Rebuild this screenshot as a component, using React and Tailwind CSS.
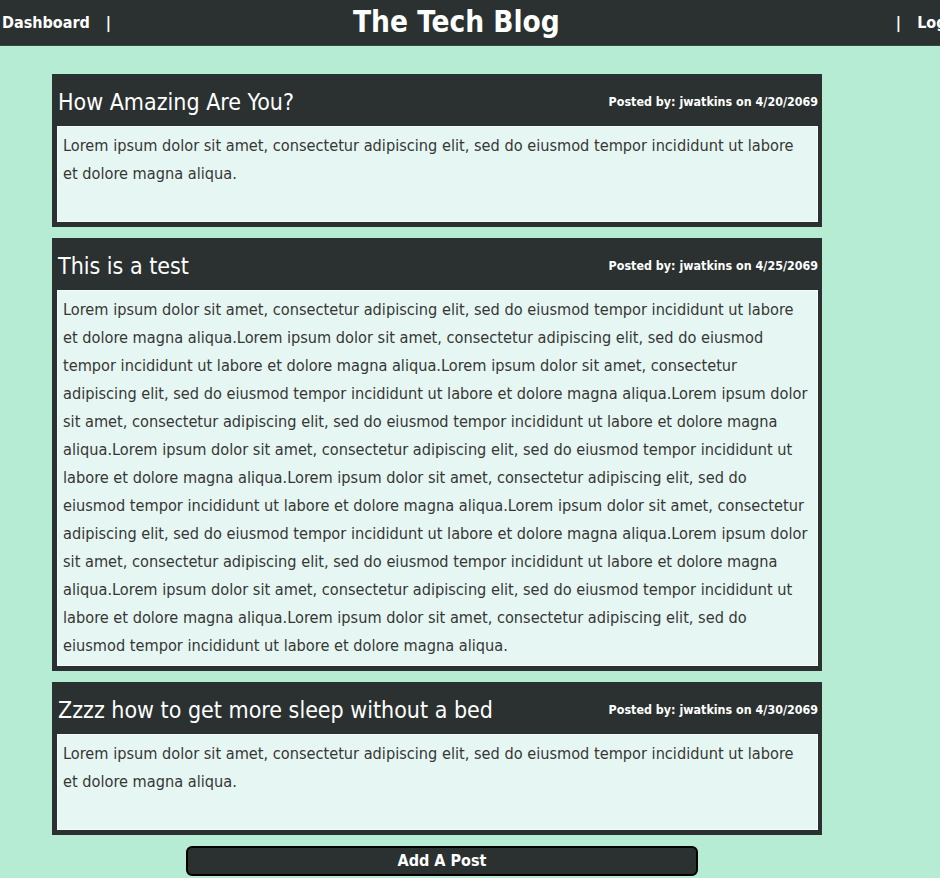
import React from 'react';

const LOREM =
  'Lorem ipsum dolor sit amet, consectetur adipiscing elit, sed do eiusmod tempor incididunt ut labore et dolore magna aliqua.';

const posts = [
  { title: 'How Amazing Are You?', author: 'jwatkins', date: '4/20/2069', body: LOREM },
  { title: 'This is a test', author: 'jwatkins', date: '4/25/2069', body: LOREM.repeat(10) },
  { title: 'Zzzz how to get more sleep without a bed', author: 'jwatkins', date: '4/30/2069', body: LOREM },
];

const font = { fontFamily: '"DejaVu Sans Condensed", "Liberation Sans", sans-serif' };

function PostCard({ post }) {
  return (
    <div className="bg-[#2b3131] pb-[5px] pl-[5px] pr-[4px]">
      <div className="flex h-[52px] items-center justify-between pl-[1px] pt-[4px]">
        <h2 className="text-[23px] text-white">{post.title}</h2>
        <span className="text-[12.4px] font-bold text-white">
          Posted by: {post.author} on {post.date}
        </span>
      </div>
      <div className="min-h-[96px] border border-[#f4fbf9] bg-[#e6f6f2] px-[5px] pb-[5px] pt-[5px] text-[16.2px] leading-[28px] text-[#363636]">
        {post.body}
      </div>
    </div>
  );
}

export default function App() {
  return (
    <div className="min-h-[878px] bg-[#b5ecd3]" style={font}>
      <header className="h-[46px] overflow-hidden border-b border-[#3c4444] bg-[#2b3131]">
        <div className="flex h-full items-center whitespace-nowrap text-white">
          <span className="w-[353px] shrink-0 pl-[2px] text-[16px] font-bold">
            Dashboard<span className="ml-[16px]">|</span>
          </span>
          <h1 className="shrink-0 text-[29.5px] font-bold leading-none">The Tech Blog</h1>
          <span className="ml-[336px] shrink-0 text-[16px] font-bold">
            |<span className="ml-[16px]">Logout</span>
          </span>
        </div>
      </header>

      <main className="ml-[52px] w-[770px] pt-[28px]">
        <div className="flex flex-col gap-[11px]">
          {posts.map((p) => (
            <PostCard key={p.date} post={p} />
          ))}
        </div>
        <div className="mt-[11px] pl-[134px]">
          <button className="h-[30px] w-[512px] rounded-[6px] border-2 border-black bg-[#2b3131] text-[16px] font-bold text-white">
            Add A Post
          </button>
        </div>
      </main>
    </div>
  );
}
